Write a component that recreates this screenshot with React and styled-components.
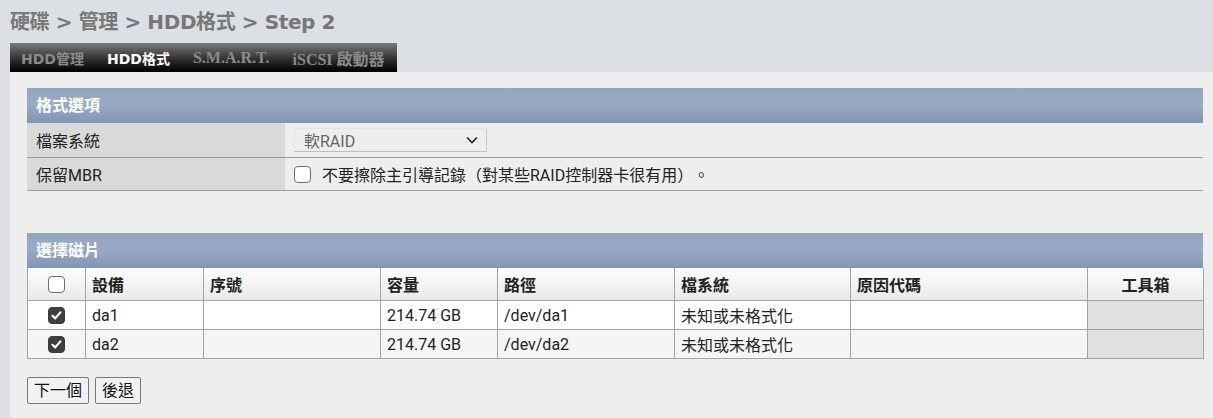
import React from "react";
import styled, { createGlobalStyle } from "styled-components";

const GlobalStyle = createGlobalStyle`
  html, body { margin: 0; padding: 0; }
  body {
    background: #dcdfe4;
    font-family: Roboto, "Noto Sans CJK TC", sans-serif;
    font-size: 16px;
    color: #222;
    text-spacing-trim: space-all;
  }
`;

const CJK = `Roboto, "Noto Sans CJK TC", sans-serif`;

const Page = styled.div`
  width: 1213px;
  min-height: 418px;
  display: flex;
  flex-direction: column;
`;

const Top = styled.div`
  padding: 9px 0 0 10px;
`;

const Crumb = styled.h1`
  margin: 0;
  height: 34px;
  font-family: "DejaVu Sans", "Noto Sans CJK TC", sans-serif;
  font-size: 20px;
  letter-spacing: -0.4px;
  font-weight: bold;
  color: #777;
  line-height: 26px;
`;

const TabBar = styled.div`
  display: flex;
  align-items: center;
  width: 387px;
  height: 29px;
  background: linear-gradient(#7a7a7a, #2a2a2a 60%, #000);
  padding-left: 11px;
  box-sizing: border-box;
  gap: 23px;
`;

const Tab = styled.span`
  font-family: ${(p) =>
    p.$serif ? `"Liberation Serif", "Noto Sans CJK TC", serif` : `"DejaVu Sans", "Noto Sans CJK TC", sans-serif`};
  font-size: ${(p) => (p.$serif ? "16px" : "14px")};
  font-weight: bold;
  color: ${(p) => (p.$active ? "#fff" : "#8a8a8a")};
  white-space: nowrap;
`;

const Content = styled.div`
  flex: 1;
  margin-left: 10px;
  background: #eeeeee;
  padding: 16px 10px 14px 17px;
`;

const Panel = styled.div`
  margin-bottom: ${(p) => p.$gap || 0}px;
`;

const PanelHead = styled.div`
  height: 35px;
  line-height: 35px;
  padding-left: 9px;
  background: linear-gradient(#93a6c0, #98aac4 45%, #8296b4);
  color: #fff;
  font-weight: bold;
  font-size: 16px;
`;

const OptRow = styled.div`
  display: grid;
  grid-template-columns: 258px 1fr;
  height: ${(p) => p.$h}px;
  border-bottom: 1px solid #9c9c9c;
`;

const OptLabel = styled.div`
  background: #d9d9d9;
  display: flex;
  align-items: center;
  padding-left: 9px;
`;

const OptValue = styled.div`
  display: flex;
  align-items: center;
  padding-left: 9px;
  gap: 11px;
`;

const Select = styled.div`
  width: 193px;
  height: 24px;
  box-sizing: border-box;
  border: 1px solid #e4e4e4;
  border-right-color: #c6c6c6;
  border-bottom-color: #bdbdbd;
  display: flex;
  align-items: center;
  justify-content: space-between;
  padding: 0 7px 0 9px;
  color: #666;
`;

const Box = styled.span`
  display: inline-block;
  width: 17px;
  height: 17px;
  box-sizing: border-box;
  border-radius: 4px;
  border: 1px solid ${(p) => (p.$on ? "#3a3a3a" : "#6e6e6e")};
  background: ${(p) => (p.$on ? "#3f3f3f" : "#fff")};
  position: relative;
  flex: none;
`;

const Check = ({ on }) => (
  <Box $on={on}>
    {on && (
      <svg width="15" height="15" viewBox="0 0 15 15" style={{ position: "absolute", left: 0, top: 0 }}>
        <path d="M3.5 7.8 L6.2 10.4 L11.4 4.4" fill="none" stroke="#fff" strokeWidth="2.2" strokeLinecap="round" strokeLinejoin="round" />
      </svg>
    )}
  </Box>
);

const Table = styled.table`
  width: 100%;
  border-collapse: collapse;
  table-layout: fixed;
`;

const Th = styled.th`
  height: 32px;
  padding: 0 0 0 ${(p) => (p.$center ? 0 : 6)}px;
  text-align: ${(p) => (p.$center ? "center" : "left")};
  font-weight: bold;
  background: linear-gradient(#fdfdfd, #e9e9e9);
  border: 1px solid #a3a3a3;
  border-top: none;
`;

const Tr = styled.tr`
  background: ${(p) => (p.$alt ? "#f5f5f5" : "#fff")};
`;

const Td = styled.td`
  height: 28px;
  padding: 0 0 0 ${(p) => (p.$center ? 0 : 6)}px;
  text-align: ${(p) => (p.$center ? "center" : "left")};
  border: 1px solid #a3a3a3;
  background: ${(p) => (p.$tool ? "#e0e0e0" : "transparent")};
  vertical-align: middle;
`;

const CellBox = styled.div`
  display: flex;
  justify-content: center;
  align-items: center;
`;

const Buttons = styled.div`
  display: flex;
  gap: 6px;
  margin-top: 18px;
`;

const Button = styled.button`
  height: 27px;
  padding: 0 6px;
  font-family: ${CJK};
  font-size: 16px;
  line-height: 25px;
  color: #111;
  background: #f2f2f2;
  border: 1px solid #777;
  border-radius: 2px;
`;

const cols = [58, 118, 177, 117, 177, 176, 237, 116];

const disks = [
  { dev: "da1", size: "214.74 GB", path: "/dev/da1", fs: "未知或未格式化" },
  { dev: "da2", size: "214.74 GB", path: "/dev/da2", fs: "未知或未格式化" },
];

export default function App() {
  return (
    <Page>
      <GlobalStyle />
      <Top>
        <Crumb>硬碟 &gt; 管理 &gt; HDD格式 &gt; Step 2</Crumb>
        <TabBar>
          <Tab>HDD管理</Tab>
          <Tab $active>HDD格式</Tab>
          <Tab $serif>S.M.A.R.T.</Tab>
          <Tab $serif>iSCSI 啟動器</Tab>
        </TabBar>
      </Top>
      <Content>
        <Panel $gap={42}>
          <PanelHead>格式選項</PanelHead>
          <OptRow $h={34}>
            <OptLabel>檔案系統</OptLabel>
            <OptValue>
              <Select>
                <span>軟RAID</span>
                <svg width="14" height="14" viewBox="0 0 14 14">
                  <path d="M2 4.5 L7 9.5 L12 4.5" fill="none" stroke="#222" strokeWidth="1.6" />
                </svg>
              </Select>
            </OptValue>
          </OptRow>
          <OptRow $h={32}>
            <OptLabel>保留MBR</OptLabel>
            <OptValue>
              <Check />
              <span>不要擦除主引導記錄（對某些RAID控制器卡很有用）。</span>
            </OptValue>
          </OptRow>
        </Panel>
        <Panel>
          <PanelHead>選擇磁片</PanelHead>
          <Table>
            <colgroup>
              {cols.map((w, i) => (
                <col key={i} style={{ width: w }} />
              ))}
            </colgroup>
            <thead>
              <tr>
                <Th $center>
                  <CellBox>
                    <Check />
                  </CellBox>
                </Th>
                <Th>設備</Th>
                <Th>序號</Th>
                <Th>容量</Th>
                <Th>路徑</Th>
                <Th>檔系統</Th>
                <Th>原因代碼</Th>
                <Th $center>工具箱</Th>
              </tr>
            </thead>
            <tbody>
              {disks.map((d, i) => (
                <Tr key={d.dev} $alt={i % 2 === 1}>
                  <Td $center>
                    <CellBox>
                      <Check on />
                    </CellBox>
                  </Td>
                  <Td>{d.dev}</Td>
                  <Td></Td>
                  <Td>{d.size}</Td>
                  <Td>{d.path}</Td>
                  <Td>{d.fs}</Td>
                  <Td></Td>
                  <Td $tool></Td>
                </Tr>
              ))}
            </tbody>
          </Table>
        </Panel>
        <Buttons>
          <Button>下一個</Button>
          <Button>後退</Button>
        </Buttons>
      </Content>
    </Page>
  );
}
